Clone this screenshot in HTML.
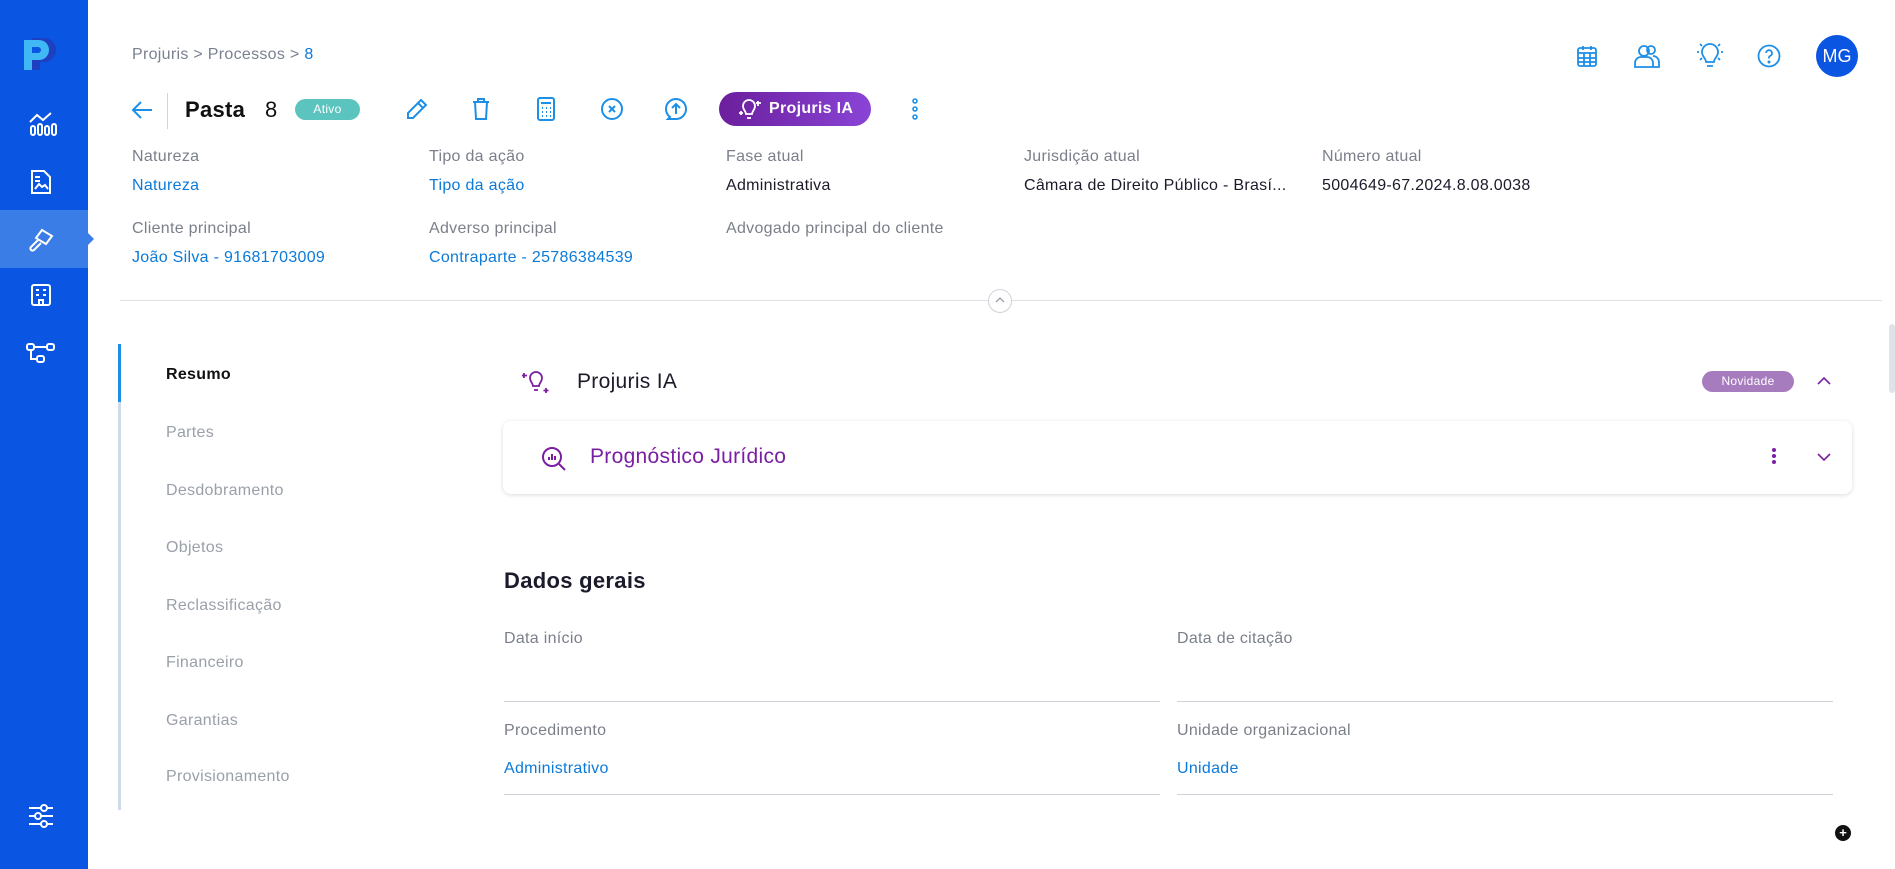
<!DOCTYPE html>
<html><head><meta charset="utf-8"><style>
*{margin:0;padding:0;box-sizing:border-box}
body{width:1895px;height:869px;overflow:hidden;background:#fff;font-family:"Liberation Sans","DejaVu Sans",sans-serif;position:relative;color:#1b1b2b;letter-spacing:0.3px}
.a{position:absolute;white-space:nowrap}
.sb{position:absolute;left:0;top:0;width:88px;height:869px;background:#0a55e2}
.lbl{font-size:16px;color:#7a7f8a}
.val{font-size:16px;color:#1b1b2b}
.lnk{font-size:16px;color:#0b7ad9}
.nav{font-size:16px;color:#9aa0aa;left:166px}
svg{position:absolute;overflow:visible}
</style></head><body>
<div class="sb"></div>
<div class="a" style="left:0;top:210px;width:88px;height:58px;background:#3a7de6"></div>
<div class="a" style="left:88px;top:233px;width:0;height:0;border-top:6px solid transparent;border-bottom:6px solid transparent;border-left:6px solid #3a7de6"></div>
<!-- logo -->
<svg style="left:18px;top:36px" width="44" height="36" viewBox="0 0 44 36"><path d="M14 2h12a12 12 0 0 1 0 24h-4v8h-8z" fill="#1e3fbf"/><path d="M6 4h15a10 10 0 0 1 0 20h-7v10H6z" fill="#40b8f5"/><path d="M14 11h6a3 3 0 0 1 0 6h-6z" fill="#0a55e2"/></svg>
<!-- sidebar icons -->
<svg style="left:28px;top:112px" width="32" height="24" viewBox="0 0 32 24" fill="none" stroke="#fff" stroke-width="2"><path d="M2 10l7-7 6 5 8-7"/><rect x="3" y="14" width="4" height="9" rx="2"/><rect x="10" y="12" width="4" height="11" rx="2"/><rect x="17" y="14" width="4" height="9" rx="2"/><rect x="24" y="12" width="4" height="11" rx="2"/></svg>
<svg style="left:30px;top:169px" width="22" height="26" viewBox="0 0 22 26" fill="none" stroke="#fff" stroke-width="2"><path d="M2 2h12l6 6v16H2z"/><path d="M5 8h5M5 12h5M5 20l4-5 3 3 3-2 3 4"/></svg>
<svg style="left:28px;top:226px" width="30" height="26" viewBox="0 0 30 26" fill="none" stroke="#fff" stroke-width="2"><path d="M14 4l10 6-6 8-10-6z"/><path d="M10 14l-7 7a2 2 0 0 0 3 3l7-7"/></svg>
<svg style="left:30px;top:283px" width="22" height="24" viewBox="0 0 22 24" fill="none" stroke="#fff" stroke-width="2"><rect x="2" y="2" width="18" height="20" rx="2"/><path d="M6 7h3M13 7h3M6 12h3M13 12h3M9 22v-5h4v5"/></svg>
<svg style="left:25px;top:342px" width="32" height="22" viewBox="0 0 32 22" fill="none" stroke="#fff" stroke-width="2"><rect x="2" y="2" width="7" height="6" rx="2"/><rect x="22" y="2" width="7" height="6" rx="2"/><rect x="12" y="14" width="7" height="6" rx="2"/><path d="M9 5h13M6 8v9h6"/></svg>
<svg style="left:28px;top:804px" width="26" height="24" viewBox="0 0 26 24" fill="none" stroke="#fff" stroke-width="2"><path d="M1 4h24M1 12h24M1 20h24"/><circle cx="16" cy="4" r="3" fill="#0a55e2"/><circle cx="10" cy="12" r="3" fill="#0a55e2"/><circle cx="16" cy="20" r="3" fill="#0a55e2"/></svg>

<!-- breadcrumb -->
<div class="a" style="left:132px;top:46px;font-size:16px;color:#7a8190">Projuris &gt; Processos &gt; <span style="color:#0b7ad9">8</span></div>
<!-- top right -->
<svg style="left:1577px;top:45px" width="20" height="22" viewBox="0 0 20 22" fill="none" stroke="#1e8fe6" stroke-width="1.8"><rect x="1" y="3" width="18" height="18" rx="2"/><path d="M1 8h18M1 13h18M1 17h18M7 8v13M13 8v13M6 1v4M14 1v4"/></svg>
<svg style="left:1633px;top:44px" width="28" height="24" viewBox="0 0 28 24" fill="none" stroke="#1e8fe6" stroke-width="1.8"><circle cx="11" cy="7" r="5"/><circle cx="18" cy="6" r="4"/><path d="M2 23v-4a6 6 0 0 1 6-6h6a6 6 0 0 1 6 6v4zM20 12a6 6 0 0 1 6 6v5h-6"/></svg>
<svg style="left:1696px;top:42px" width="28" height="28" viewBox="0 0 28 28" fill="none" stroke="#1e8fe6" stroke-width="1.8"><path d="M10 20c0-4-4-5-4-10a8 8 0 0 1 16 0c0 5-4 6-4 10zM11 24h6M1 10h2M25 10h2M4 2l2 2M24 2l-2 2M4 18l2-2M24 18l-2-2"/></svg>
<svg style="left:1757px;top:44px" width="24" height="24" viewBox="0 0 24 24" fill="none" stroke="#1e8fe6" stroke-width="1.8"><circle cx="12" cy="12" r="10.5"/><path d="M9 9a3 3 0 1 1 4 3c-1 .5-1 1-1 2.5"/><circle cx="12" cy="18" r=".6" fill="#1e8fe6"/></svg>
<div class="a" style="left:1816px;top:35px;width:42px;height:42px;border-radius:50%;background:#0a55e2;color:#fff;font-size:18px;line-height:42px;text-align:center;letter-spacing:0">MG</div>

<!-- toolbar -->
<svg style="left:131px;top:100px" width="22" height="20" viewBox="0 0 22 20" fill="none" stroke="#1e8fe6" stroke-width="2"><path d="M21 10H2M10 2l-8 8 8 8"/></svg>
<div class="a" style="left:167px;top:93px;width:1px;height:36px;background:#cfd3da"></div>
<div class="a" style="left:185px;top:97px;font-size:22px;font-weight:bold;color:#111">Pasta</div>
<div class="a" style="left:265px;top:97px;font-size:22px;color:#111">8</div>
<div class="a" style="left:295px;top:99px;width:65px;height:21px;border-radius:11px;background:#5bc4bf;color:#fff;font-size:12px;line-height:21px;text-align:center">Ativo</div>
<svg style="left:406px;top:98px" width="22" height="22" viewBox="0 0 22 22" fill="none" stroke="#1e8fe6" stroke-width="2"><path d="M15 2l5 5L7 20H2v-5zM12 5l5 5"/></svg>
<svg style="left:472px;top:97px" width="18" height="24" viewBox="0 0 18 24" fill="none" stroke="#1e8fe6" stroke-width="2"><path d="M1 5h16M6 5V2h6v3M3 5l1 17h10l1-17"/></svg>
<svg style="left:537px;top:97px" width="18" height="24" viewBox="0 0 18 24" fill="none" stroke="#1e8fe6" stroke-width="2"><rect x="1" y="1" width="16" height="22" rx="2"/><path d="M4 6h10M5 11h1M9 11h1M13 11h1M5 15h1M9 15h1M13 15h1M5 19h1M9 19h1M13 19h1"/></svg>
<svg style="left:601px;top:98px" width="22" height="22" viewBox="0 0 22 22" fill="none" stroke="#1e8fe6" stroke-width="2"><circle cx="11" cy="11" r="10"/><path d="M8 8l6 6M14 8l-6 6"/></svg>
<svg style="left:664px;top:97px" width="24" height="24" viewBox="0 0 24 24" fill="none" stroke="#1e8fe6" stroke-width="2"><path d="M6 20a10 10 0 1 1 6 2H4zM12 17V8M8 11l4-4 4 4"/></svg>
<div class="a" style="left:719px;top:92px;width:152px;height:34px;border-radius:17px;background:linear-gradient(90deg,#6b1f9c,#8a44d6);color:#fff;font-size:16px;font-weight:bold;line-height:34px;padding-left:50px">Projuris IA</div>
<svg style="left:738px;top:98px" width="24" height="22" viewBox="0 0 24 22" fill="none" stroke="#fff" stroke-width="1.8"><path d="M8 16c0-3-3-4-3-8a6 6 0 0 1 12 0c0 4-3 5-3 8zM9 20h4M20 3v5M18 5h5M3 13v4M1 15h4"/></svg>
<svg style="left:912px;top:98px" width="6" height="22" viewBox="0 0 6 22" fill="none" stroke="#1e8fe6" stroke-width="1.6"><circle cx="3" cy="3" r="2"/><circle cx="3" cy="11" r="2"/><circle cx="3" cy="19" r="2"/></svg>

<!-- fields -->
<div class="a lbl" style="left:132px;top:148px">Natureza</div>
<div class="a lnk" style="left:132px;top:177px">Natureza</div>
<div class="a lbl" style="left:429px;top:148px">Tipo da ação</div>
<div class="a lnk" style="left:429px;top:177px">Tipo da ação</div>
<div class="a lbl" style="left:726px;top:148px">Fase atual</div>
<div class="a val" style="left:726px;top:177px">Administrativa</div>
<div class="a lbl" style="left:1024px;top:148px">Jurisdição atual</div>
<div class="a val" style="left:1024px;top:177px">Câmara de Direito Público - Brasí...</div>
<div class="a lbl" style="left:1322px;top:148px">Número atual</div>
<div class="a val" style="left:1322px;top:177px">5004649-67.2024.8.08.0038</div>
<div class="a lbl" style="left:132px;top:220px">Cliente principal</div>
<div class="a lnk" style="left:132px;top:249px">João Silva - 91681703009</div>
<div class="a lbl" style="left:429px;top:220px">Adverso principal</div>
<div class="a lnk" style="left:429px;top:249px">Contraparte - 25786384539</div>
<div class="a lbl" style="left:726px;top:220px">Advogado principal do cliente</div>

<div class="a" style="left:120px;top:300px;width:1762px;height:1px;background:#dde0e5"></div>
<div class="a" style="left:988px;top:289px;width:24px;height:24px;border-radius:50%;border:1px solid #cfd3da;background:#fff"></div>
<svg style="left:995px;top:297px" width="10" height="6" viewBox="0 0 10 6" fill="none" stroke="#9aa0aa" stroke-width="1.3"><path d="M1 5l4-4 4 4"/></svg>

<!-- left nav -->
<div class="a" style="left:118px;top:344px;width:3px;height:466px;background:#cfdbe8"></div>
<div class="a" style="left:118px;top:344px;width:3px;height:58px;background:#1e8fe6"></div>
<div class="a" style="left:166px;top:366px;font-size:16px;font-weight:bold;color:#111">Resumo</div>
<div class="a nav" style="top:424px">Partes</div>
<div class="a nav" style="top:482px">Desdobramento</div>
<div class="a nav" style="top:539px">Objetos</div>
<div class="a nav" style="top:597px">Reclassificação</div>
<div class="a nav" style="top:654px">Financeiro</div>
<div class="a nav" style="top:712px">Garantias</div>
<div class="a nav" style="top:768px">Provisionamento</div>

<!-- Projuris IA section -->
<svg style="left:522px;top:368px" width="30" height="28" viewBox="0 0 30 28" fill="none" stroke="#7b1fa2" stroke-width="1.8"><path d="M11 18c0-3-3-4-3-8a6 6 0 0 1 12 0c0 4-3 5-3 8zM12 22h4M2 5v5M0 7.5h5M24 20v5M21.5 22.5h5"/></svg>
<div class="a" style="left:577px;top:370px;font-size:21px;color:#1b1b2b">Projuris IA</div>
<div class="a" style="left:1702px;top:371px;width:92px;height:21px;border-radius:11px;background:#a77cbf;color:#fff;font-size:12px;line-height:21px;text-align:center">Novidade</div>
<svg style="left:1817px;top:376px" width="14" height="9" viewBox="0 0 14 9" fill="none" stroke="#7b1fa2" stroke-width="1.6"><path d="M1 8l6-6 6 6"/></svg>
<div class="a" style="left:503px;top:421px;width:1349px;height:73px;border-radius:8px;background:#fff;box-shadow:0 1px 5px rgba(0,0,0,.14)"></div>
<svg style="left:541px;top:446px" width="26" height="26" viewBox="0 0 26 26" fill="none" stroke="#7b1fa2" stroke-width="2"><circle cx="11" cy="11" r="9"/><path d="M18 18l6 6M8 14v-3M11 14V8M14 14v-4"/></svg>
<div class="a" style="left:590px;top:445px;font-size:21px;color:#7b1fa2">Prognóstico Jurídico</div>
<svg style="left:1771px;top:447px" width="6" height="18" viewBox="0 0 6 18" fill="#7b1fa2"><circle cx="3" cy="3" r="2"/><circle cx="3" cy="9" r="2"/><circle cx="3" cy="15" r="2"/></svg>
<svg style="left:1817px;top:453px" width="14" height="9" viewBox="0 0 14 9" fill="none" stroke="#7b1fa2" stroke-width="1.6"><path d="M1 1l6 6 6-6"/></svg>

<!-- Dados gerais -->
<div class="a" style="left:504px;top:568px;font-size:22px;font-weight:bold;color:#1b1b2b">Dados gerais</div>
<div class="a lbl" style="left:504px;top:630px">Data início</div>
<div class="a lbl" style="left:1177px;top:630px">Data de citação</div>
<div class="a" style="left:504px;top:701px;width:656px;height:1px;background:#cfd3da"></div>
<div class="a" style="left:1177px;top:701px;width:656px;height:1px;background:#cfd3da"></div>
<div class="a lbl" style="left:504px;top:722px">Procedimento</div>
<div class="a lnk" style="left:504px;top:760px">Administrativo</div>
<div class="a lbl" style="left:1177px;top:722px">Unidade organizacional</div>
<div class="a lnk" style="left:1177px;top:760px">Unidade</div>
<div class="a" style="left:504px;top:794px;width:656px;height:1px;background:#cfd3da"></div>
<div class="a" style="left:1177px;top:794px;width:656px;height:1px;background:#cfd3da"></div>

<div class="a" style="left:1835px;top:825px;width:16px;height:16px;border-radius:50%;background:#111;color:#fff;font-size:13px;line-height:15px;text-align:center;font-weight:bold;letter-spacing:0">+</div>
<div class="a" style="left:1889px;top:324px;width:6px;height:69px;border-radius:3px;background:#dfe3e8"></div>
</body></html>
